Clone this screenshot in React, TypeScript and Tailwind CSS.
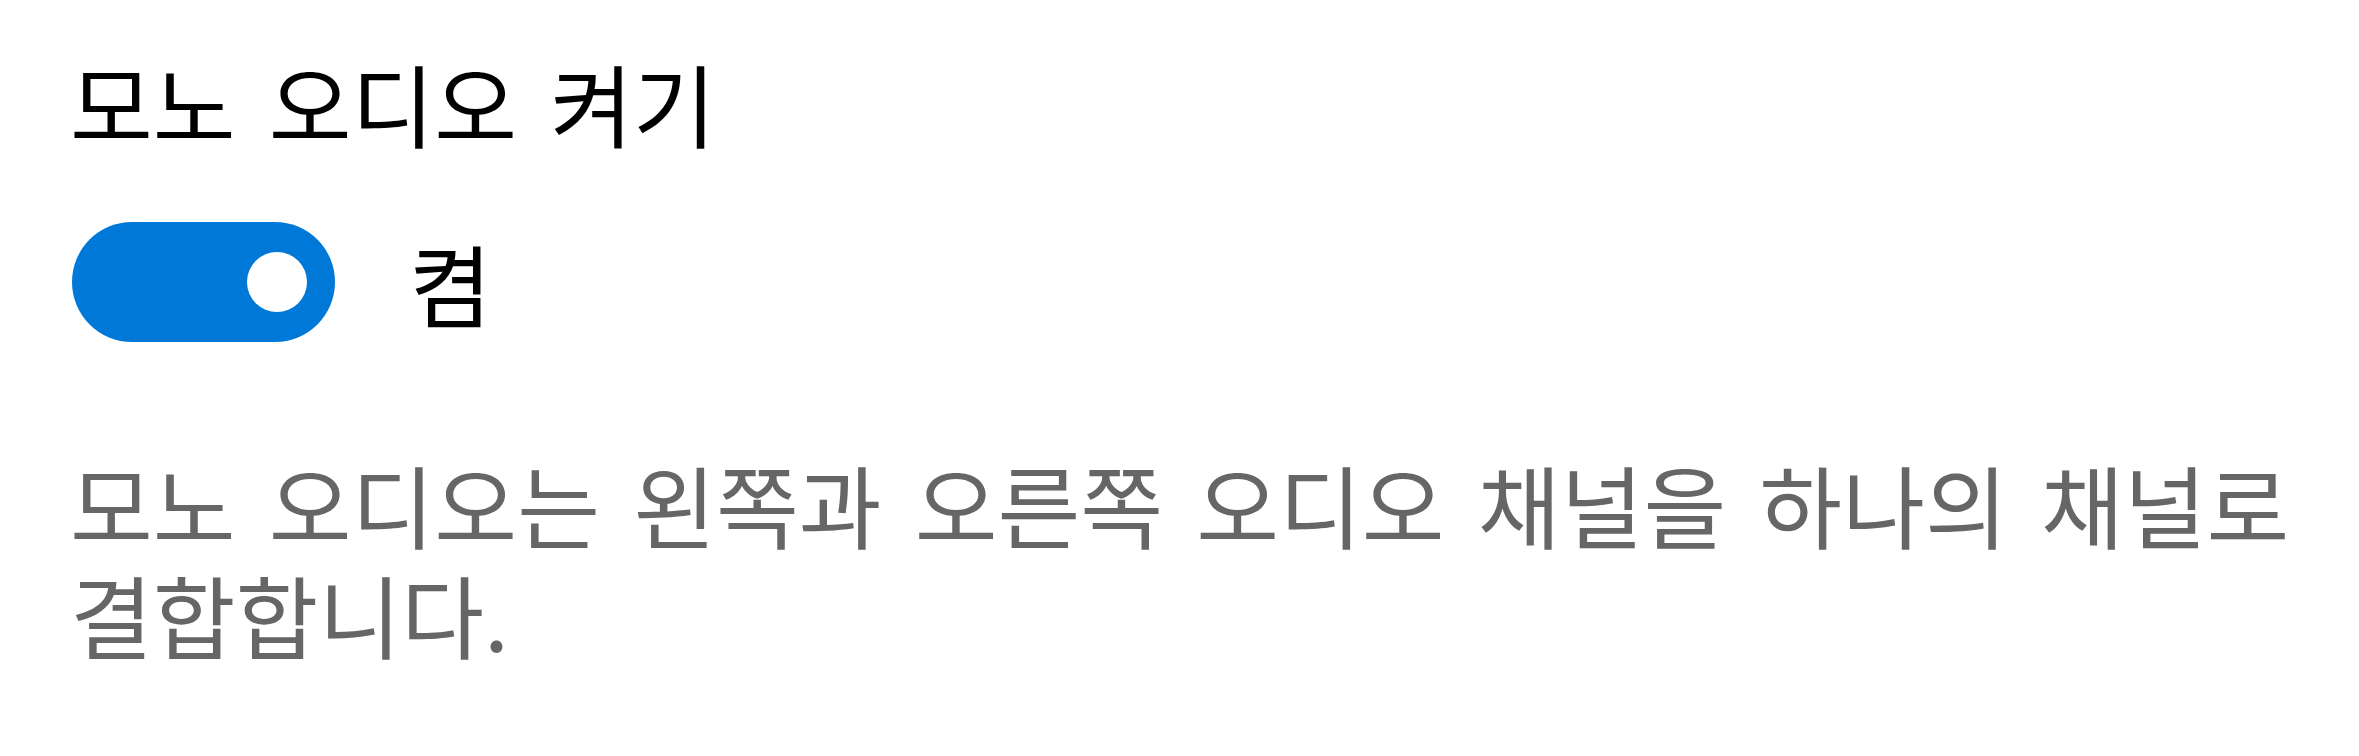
export default function App() {
  return (
    <div className="w-full h-[756px] bg-white pl-[70px] pt-[47px] font-['Noto_Sans_CJK_KR','Noto_Sans',sans-serif] font-normal [word-spacing:13px]">
      {/* 제목 */}
      <h2 className="text-[90px] leading-[110px] text-black">모노 오디오 켜기</h2>

      {/* 토글 */}
      <div className="flex items-center gap-[74px] mt-[65px] ml-[2px]">
        <div className="w-[263px] h-[120px] rounded-full bg-[#0078d7] flex items-center justify-end pr-[28px] shrink-0">
          <div className="w-[60px] h-[60px] rounded-full bg-white" />
        </div>
        <span className="text-[90px] leading-[110px] text-black">켬</span>
      </div>

      {/* 설명 */}
      <p className="mt-[106px] text-[90px] leading-[110px] text-[#666666] whitespace-nowrap">
        모노 오디오는 왼쪽과 오른쪽 오디오 채널을 하나의 채널로
        <br />
        결합합니다.
      </p>
    </div>
  );
}
